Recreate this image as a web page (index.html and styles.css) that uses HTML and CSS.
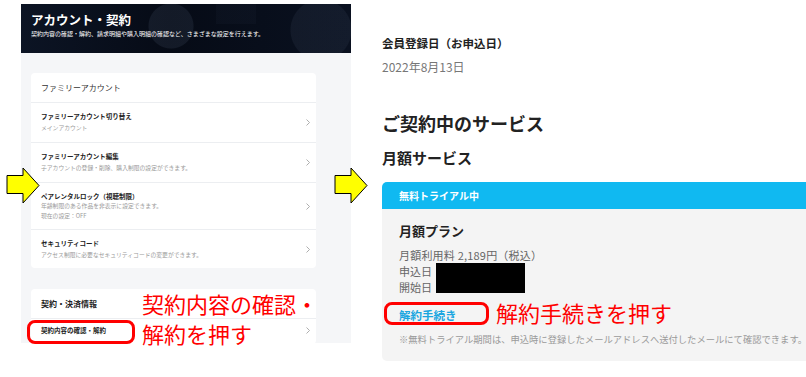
FILE: index.html
```html
<!DOCTYPE html>
<html lang="ja">
<head>
<meta charset="utf-8">
<title>アカウント・契約</title>
<link rel="stylesheet" href="styles.css">
</head>
<body>
<div class="page">
  <section class="left">
    <div class="acct">
      <header class="acct-head">
        <h1>アカウント・契約</h1>
        <p>契約内容の確認・解約、請求明細や購入明細の確認など、さまざまな設定を行えます。</p>
      </header>
      <div class="acct-body">
        <div class="card">
          <div class="card-title">ファミリーアカウント</div>
          <div class="row">
            <div class="row-text">
              <div class="row-title">ファミリーアカウント切り替え</div>
              <div class="row-sub">メインアカウント</div>
            </div>
            <svg class="chev" viewBox="0 0 4 7"><polyline points="0.5,0.5 3.5,3.5 0.5,6.5"/></svg>
          </div>
          <div class="row">
            <div class="row-text">
              <div class="row-title">ファミリーアカウント編集</div>
              <div class="row-sub">子アカウントの登録・削除、購入制限の設定ができます。</div>
            </div>
            <svg class="chev" viewBox="0 0 4 7"><polyline points="0.5,0.5 3.5,3.5 0.5,6.5"/></svg>
          </div>
          <div class="row row-double">
            <div class="row-text">
              <div class="row-title">ペアレンタルロック（視聴制限）</div>
              <div class="row-sub">年齢制限のある作品を非表示に設定できます。<br>現在の設定：OFF</div>
            </div>
            <svg class="chev" viewBox="0 0 4 7"><polyline points="0.5,0.5 3.5,3.5 0.5,6.5"/></svg>
          </div>
          <div class="row row-last">
            <div class="row-text">
              <div class="row-title">セキュリティコード</div>
              <div class="row-sub">アクセス制限に必要なセキュリティコードの変更ができます。</div>
            </div>
            <svg class="chev" viewBox="0 0 4 7"><polyline points="0.5,0.5 3.5,3.5 0.5,6.5"/></svg>
          </div>
        </div>
        <div class="card">
          <div class="card-title strong">契約・決済情報</div>
          <div class="row row-single">
            <div class="row-text">
              <div class="row-title">契約内容の確認・解約</div>
            </div>
            <svg class="chev" viewBox="0 0 4 7"><polyline points="0.5,0.5 3.5,3.5 0.5,6.5"/></svg>
          </div>
        </div>
      </div>
    </div>
  </section>

  <section class="right">
    <div class="reg-label">会員登録日（お申込日）</div>
    <div class="reg-date">2022年8月13日</div>
    <h2 class="svc-title">ご契約中のサービス</h2>
    <h3 class="svc-sub">月額サービス</h3>
    <div class="plan">
      <div class="plan-head">無料トライアル中</div>
      <div class="plan-body">
        <div class="plan-name">月額プラン</div>
        <div class="plan-line plan-fee">月額利用料 2,189円（税込）</div>
        <div class="plan-dates">
          <div class="plan-labels">
            <div class="plan-line">申込日</div>
            <div class="plan-line">開始日</div>
          </div>
          <div class="redact"></div>
        </div>
        <a class="cancel-link" href="#">解約手続き</a>
        <p class="plan-note">※無料トライアル期間は、申込時に登録したメールアドレスへ送付したメールにて確認できます。</p>
      </div>
    </div>
  </section>
</div>

<svg class="arrow arrow-left" viewBox="0 0 35 38"><polygon points="1,8.5 17,8.5 17,1 33,18.5 17,36 17,26.5 1,26.5"/></svg>
<svg class="arrow arrow-right" viewBox="0 0 35 38"><polygon points="1,8.5 17,8.5 17,1 33,18.5 17,36 17,26.5 1,26.5"/></svg>

<div class="mark mark-left"></div>
<div class="callout callout-left">契約内容の確認・<br>解約を押す</div>
<div class="mark mark-right"></div>
<div class="callout callout-right">解約手続きを押す</div>
</body>
</html>
```

FILE: styles.css
```css
* { box-sizing: border-box; margin: 0; padding: 0; }

html, body {
  width: 806px;
  height: 377px;
  overflow: hidden;
  background: #fff;
}

body {
  position: relative;
  font-family: "Noto Sans CJK JP", "Noto Sans", sans-serif;
  color: #222;
}

.page {
  display: flex;
  align-items: flex-start;
}

/* ---------- left screenshot ---------- */
.left {
  flex: none;
  padding: 4px 0 0 21px;
}

.acct {
  width: 330px;
  height: 339px;
  overflow: hidden;
  background: #f5f6f8;
}

.acct-head {
  height: 49px;
  padding: 8px 10px 0;
  color: #fff;
  background:
    radial-gradient(circle at 150px 22px, rgba(90, 105, 130, 0.16) 0 22px, transparent 23px),
    radial-gradient(circle at 300px 26px, rgba(90, 105, 130, 0.12) 0 30px, transparent 31px),
    linear-gradient(180deg, rgba(40, 50, 70, 0.12) 0 40%, transparent 40%) 195px 0 / 40px 100% no-repeat,
    linear-gradient(90deg, #0c1424 0%, #060b16 45%, #0a1120 100%);
}

.acct-head h1 {
  font-size: 12.5px;
  font-weight: 700;
  line-height: 16px;
}

.acct-head p {
  margin-top: 2px;
  font-size: 6px;
  line-height: 8px;
  white-space: nowrap;
}

.acct-body {
  display: flex;
  flex-direction: column;
  gap: 21px;
  padding: 20px 0 0 10px;
}

.card {
  width: 285px;
  background: #fff;
  border-radius: 4px;
}

.card-title {
  height: 30px;
  display: flex;
  align-items: center;
  padding-left: 10px;
  font-size: 8px;
  color: #333;
  border-bottom: 1px solid #eceef1;
}

.card-title.strong {
  font-weight: 700;
  color: #222;
}

.row {
  display: flex;
  align-items: center;
  padding: 9px 6px 9px 10px;
}

.row + .row {
  border-top: 1px solid #eceef1;
}

.row-text {
  flex: 1;
}

.row-title {
  font-size: 6.5px;
  font-weight: 700;
  line-height: 9px;
  color: #222;
}

.row-sub {
  margin-top: 2px;
  font-size: 5.8px;
  line-height: 10px;
  color: #9a9a9a;
}

.row-double {
  padding-bottom: 8px;
}

.row-double .row-sub {
  margin-top: 0;
}

.row-last {
  padding-bottom: 8px;
}

.row-single {
  padding-top: 7px;
}

.chev {
  flex: none;
  width: 4px;
  height: 7px;
  fill: none;
  stroke: #999;
  stroke-width: 0.8;
}

/* ---------- right screenshot ---------- */
.right {
  flex: none;
  padding: 35px 0 0 31px;
}

.reg-label {
  font-size: 11.5px;
  font-weight: 700;
  line-height: 16px;
  color: #222;
}

.reg-date {
  margin-top: 8px;
  font-size: 12px;
  line-height: 16px;
  color: #777;
}

.svc-title {
  margin-top: 36px;
  font-size: 18px;
  font-weight: 700;
  line-height: 24px;
  color: #222;
}

.svc-sub {
  margin-top: 13px;
  font-size: 15px;
  font-weight: 700;
  line-height: 20px;
  color: #222;
}

.plan {
  margin-top: 14px;
  width: 440px;
}

.plan-head {
  height: 27px;
  display: flex;
  align-items: center;
  padding-left: 17px;
  background: #10b9f1;
  border-radius: 5px 5px 0 0;
  color: #fff;
  font-size: 10px;
  font-weight: 700;
}

.plan-body {
  height: 152px;
  padding: 13px 17px 0;
  background: #f4f4f4;
  border-radius: 0 0 5px 5px;
}

.plan-name {
  font-size: 13px;
  font-weight: 700;
  line-height: 18px;
  color: #222;
}

.plan-line {
  font-size: 11px;
  line-height: 16px;
  color: #666;
}

.plan-fee {
  margin-top: 7px;
  letter-spacing: 0.2px;
}

.plan-dates {
  display: flex;
  align-items: flex-start;
  gap: 4px;
}

.redact {
  width: 89px;
  height: 30px;
  background: #000;
}

.cancel-link {
  display: inline-block;
  margin-top: 12px;
  font-size: 11.5px;
  font-weight: 700;
  line-height: 16px;
  color: #1aa6e0;
  text-decoration: underline;
  text-decoration-color: #7ccdf0;
  text-underline-offset: 3px;
}

.plan-note {
  margin-top: 7px;
  font-size: 9.3px;
  line-height: 14px;
  color: #9a9a9a;
  white-space: nowrap;
}

/* ---------- annotations (overlays) ---------- */
.arrow {
  position: absolute;
  width: 35px;
  height: 38px;
  fill: #ffff00;
  stroke: #000;
  stroke-width: 1;
}

.arrow-left { left: 6px; top: 167px; }
.arrow-right { left: 334px; top: 167px; }

.mark {
  position: absolute;
  border: 3px solid #ff0000;
  border-radius: 8px;
}

.mark-left { left: 27px; top: 320px; width: 108px; height: 24px; }
.mark-right { left: 384px; top: 302px; width: 105px; height: 23px; }

.callout {
  position: absolute;
  font-size: 22px;
  line-height: 30px;
  color: #ff0000;
  white-space: nowrap;
}

.callout-left { left: 142px; top: 288px; }
.callout-right { left: 496px; top: 297px; }
```
